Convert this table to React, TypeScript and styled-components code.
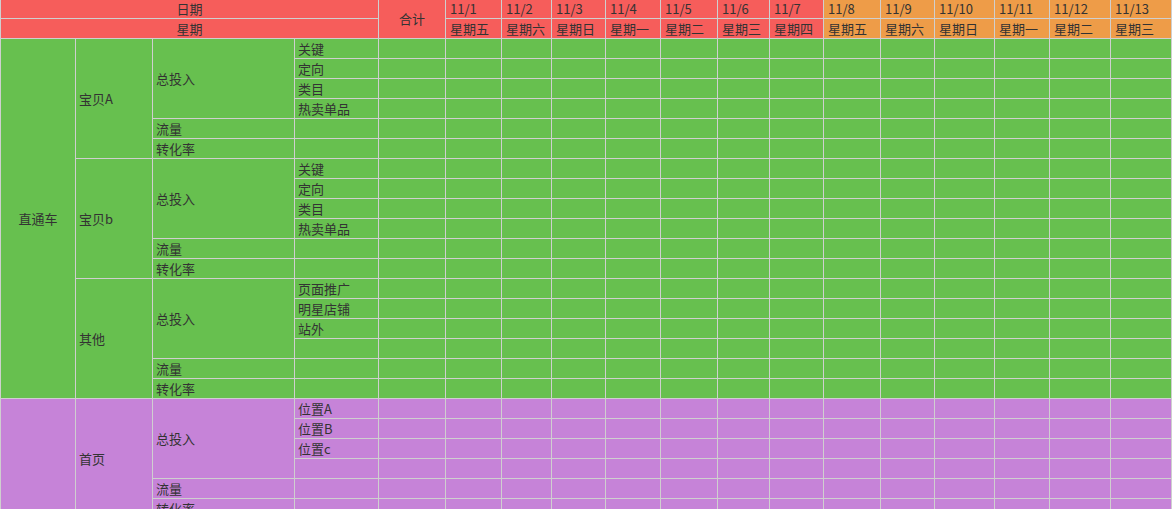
import React from "react";
import styled, { createGlobalStyle } from "styled-components";

const RED = "#f65d5b";
const ORANGE = "#ee9c48";
const GREEN = "#67c04f";
const PURPLE = "#c683d8";
const LINE = "#cfcfcf";

const Global = createGlobalStyle`
  html, body { margin: 0; padding: 0; background: #ffffff; }
  body { font-family: "Noto Sans CJK SC", "Noto Sans", sans-serif; }
`;

const Wrap = styled.div`
  height: 509px;
  overflow: hidden;
  background: #f4f4f4;
`;

const Table = styled.table`
  table-layout: fixed;
  width: 1172px;
  border-collapse: separate;
  border-spacing: 0;
  border-left: 1px solid ${LINE};
  font-size: 13px;
  color: #333;
`;

const Cell = styled.td<{ $bg: string; $center?: boolean; $h?: number }>`
  background: ${(p) => p.$bg};
  border-right: 1px solid ${LINE};
  border-bottom: 1px solid ${LINE};
  padding: 0 3px;
  height: ${(p) => p.$h ?? 19}px;
  line-height: 18px;
  text-align: ${(p) => (p.$center ? "center" : "left")};
  vertical-align: middle;
  white-space: nowrap;
  overflow: hidden;
  box-sizing: content-box;
`;

const DateCell = styled(Cell)`
  padding: 0 4px;
`;

const widths = [75, 77, 142, 84, 67, 56, 50, 54, 55, 57, 52, 54, 57, 54, 60, 55, 61, 61];

const weekdays = ["星期五", "星期六", "星期日", "星期一", "星期二", "星期三", "星期四"];
const days = Array.from({ length: 13 }, (_, i) => ({
  date: `11/${i + 1}`,
  week: weekdays[i % 7],
  bg: i < 7 ? RED : ORANGE,
}));

type Group = { name: string; items: string[] };
type Section = { name: string; color: string; groups: Group[] };

const sections: Section[] = [
  {
    name: "直通车",
    color: GREEN,
    groups: [
      { name: "宝贝A", items: ["关键", "定向", "类目", "热卖单品"] },
      { name: "宝贝b", items: ["关键", "定向", "类目", "热卖单品"] },
      { name: "其他", items: ["页面推广", "明星店铺", "站外", ""] },
    ],
  },
  {
    name: "钻展",
    color: PURPLE,
    groups: [
      { name: "首页", items: ["位置A", "位置B", "位置c", ""] },
      { name: "其他", items: ["位置A", "位置B", "位置c", ""] },
    ],
  },
];

const ValueCells = ({ bg }: { bg: string }) => (
  <>
    {Array.from({ length: 14 }, (_, i) => (
      <Cell key={i} $bg={bg} />
    ))}
  </>
);

export default function App() {
  const rows: React.ReactNode[] = [];
  sections.forEach((sec, si) => {
    const secRows = sec.groups.reduce((n, g) => n + g.items.length + 2, 0);
    sec.groups.forEach((g, gi) => {
      const gRows = g.items.length + 2;
      g.items.forEach((item, ii) => {
        rows.push(
          <tr key={`${si}-${gi}-${ii}`}>
            {gi === 0 && ii === 0 && (
              <Cell $bg={sec.color} $center rowSpan={secRows}>
                {sec.name}
              </Cell>
            )}
            {ii === 0 && (
              <Cell $bg={sec.color} rowSpan={gRows}>
                {g.name}
              </Cell>
            )}
            {ii === 0 && (
              <Cell $bg={sec.color} rowSpan={g.items.length}>
                总投入
              </Cell>
            )}
            <Cell $bg={sec.color}>{item}</Cell>
            <ValueCells bg={sec.color} />
          </tr>
        );
      });
      ["流量", "转化率"].forEach((label) => {
        rows.push(
          <tr key={`${si}-${gi}-${label}`}>
            <Cell $bg={sec.color}>{label}</Cell>
            <Cell $bg={sec.color} />
            <ValueCells bg={sec.color} />
          </tr>
        );
      });
    });
  });

  return (
    <Wrap>
      <Global />
      <Table>
        <colgroup>
          {widths.map((w, i) => (
            <col key={i} style={{ width: w }} />
          ))}
        </colgroup>
        <thead>
          <tr>
            <Cell as="th" $bg={RED} $center $h={18} colSpan={4} style={{ fontWeight: 400 }}>
              日期
            </Cell>
            <Cell as="th" $bg={RED} $center rowSpan={2} style={{ fontWeight: 400 }}>
              合计
            </Cell>
            {days.map((d) => (
              <DateCell key={d.date} $bg={d.bg} $h={18}>
                {d.date}
              </DateCell>
            ))}
          </tr>
          <tr>
            <Cell $bg={RED} $center colSpan={4}>
              星期
            </Cell>
            {days.map((d) => (
              <DateCell key={d.date} $bg={d.bg}>
                {d.week}
              </DateCell>
            ))}
          </tr>
        </thead>
        <tbody>{rows}</tbody>
      </Table>
    </Wrap>
  );
}
